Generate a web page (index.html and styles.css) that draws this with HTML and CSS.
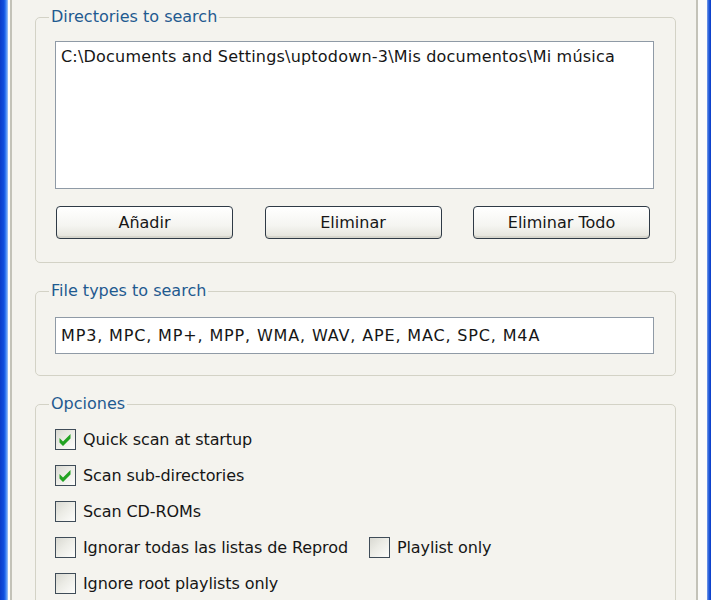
FILE: index.html
```html
<!DOCTYPE html>
<html>
<head>
<meta charset="utf-8">
<link rel="stylesheet" href="styles.css">
</head>
<body>
<div class="window">
  <div class="frame-left"></div>
  <div class="sheet">
    <div class="page">
      <fieldset class="group group-dirs">
        <legend>Directories to search</legend>
        <div class="listbox">
          <div class="list-item">C:\Documents and Settings\uptodown-3\Mis documentos\Mi música</div>
        </div>
        <div class="buttons">
          <div class="btn">Añadir</div>
          <div class="btn">Eliminar</div>
          <div class="btn">Eliminar Todo</div>
        </div>
      </fieldset>
      <fieldset class="group group-types">
        <legend>File types to search</legend>
        <div class="textbox">MP3, MPC, MP+, MPP, WMA, WAV, APE, MAC, SPC, M4A</div>
      </fieldset>
      <fieldset class="group group-opts">
        <legend>Opciones</legend>
        <div class="row"><span class="check checked"><svg viewBox="0 0 21 21" width="21" height="21"><path d="M4.5 9 L8 12.5 L15.5 5 L15.5 9.5 L8 17 L4.5 13.5 Z" fill="#22a322"/></svg></span><span class="label">Quick scan at startup</span></div>
        <div class="row"><span class="check checked"><svg viewBox="0 0 21 21" width="21" height="21"><path d="M4.5 9 L8 12.5 L15.5 5 L15.5 9.5 L8 17 L4.5 13.5 Z" fill="#22a322"/></svg></span><span class="label">Scan sub-directories</span></div>
        <div class="row"><span class="check"></span><span class="label">Scan CD-ROMs</span></div>
        <div class="row"><span class="check"></span><span class="label">Ignorar todas las listas de Reprod</span><span class="check second"></span><span class="label">Playlist only</span></div>
        <div class="row"><span class="check"></span><span class="label">Ignore root playlists only</span></div>
      </fieldset>
    </div>
  </div>
  <div class="frame-right"></div>
</div>
</body>
</html>
```
FILE: styles.css
```css
html, body {
  margin: 0;
  padding: 0;
  height: 600px;
  overflow: hidden;
  background: #f4f3ee;
}
body {
  font-family: "DejaVu Sans", sans-serif;
  font-size: 16px;
  color: #161616;
}
.window {
  display: flex;
  height: 600px;
}
.frame-left {
  width: 8px;
  flex: none;
  background: linear-gradient(to right, #0a3cc8 0, #0f4fe0 4px, #3b82f4 6px, #a9c8f5 8px);
}
.frame-right {
  width: 4px;
  flex: none;
  background: linear-gradient(to right, #7a9ee8 0, #1d57d8 2px, #0a3cc8 4px);
}
.sheet {
  flex: 1;
  display: flex;
  padding: 0 9px 0 2px;
  background: #fbfbf9;
}
.page {
  flex: 1;
  border-left: 2px solid #c3c2b8;
  border-right: 2px solid #c3c2b8;
  background: #f4f3ee;
  padding: 7px 20px 0 23px;
  min-width: 0;
}
.group {
  margin: 0;
  border: 1px solid #d3d2c6;
  border-radius: 5px;
  padding: 14px 21px 23px 19px;
  min-width: 0;
}
.group legend {
  color: #1f5a90;
  line-height: 20px;
  padding: 0 2px;
  margin-left: -6px;
}
.group-types {
  margin-top: 18px;
  padding-top: 16px;
  padding-bottom: 21px;
}
.group-opts {
  margin-top: 18px;
  padding-top: 7px;
}
.listbox {
  background: #fff;
  border: 1px solid #8f9aa6;
  padding: 3px 5px;
  box-sizing: border-box;
  height: 148px;
}
.list-item {
  line-height: 24px;
  white-space: nowrap;
  letter-spacing: 0.2px;
}
.buttons {
  display: flex;
  justify-content: space-between;
  margin-top: 17px;
  padding: 0 4px 0 1px;
}
.btn {
  width: 177px;
  height: 33px;
  box-sizing: border-box;
  border: 1px solid #2f3a46;
  border-radius: 4px;
  background: linear-gradient(to bottom, #ffffff 0%, #f5f5f1 60%, #e3e2da 100%);
  box-shadow: inset 0 -2px 0 #d6d5cc;
  display: flex;
  align-items: center;
  justify-content: center;
}
.textbox {
  height: 37px;
  box-sizing: border-box;
  background: #fff;
  border: 1px solid #8f9aa6;
  padding: 0 5px;
  display: flex;
  align-items: center;
  white-space: nowrap;
  letter-spacing: 0.85px;
}
.row {
  display: flex;
  align-items: center;
  height: 36px;
}
.check {
  width: 21px;
  height: 21px;
  box-sizing: border-box;
  border: 1px solid #3f4c58;
  background: linear-gradient(135deg, #d9d9d2 0%, #ececE6 45%, #fdfdfb 100%);
  flex: none;
}
.check svg {
  display: block;
  margin: -1px;
}
.check.second {
  margin-left: 21px;
}
.label {
  margin-left: 7px;
  white-space: nowrap;
  letter-spacing: -0.1px;
}
```
